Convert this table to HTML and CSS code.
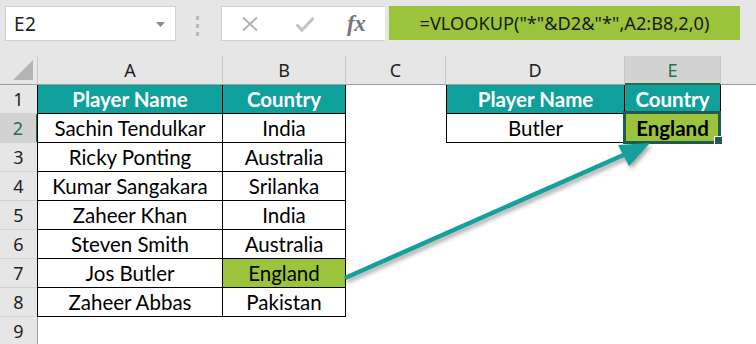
FILE: index.html
```html
<!DOCTYPE html>
<html lang="en">
<head>
<meta charset="utf-8">
<title>VLOOKUP wildcard</title>
<link rel="stylesheet" href="styles.css">
</head>
<body>
<div class="app">
  <div class="formula-bar">
    <div class="name-box">
      <span class="name-text">E2</span>
      <svg class="caret" width="9" height="5" viewBox="0 0 9 5"><path d="M0 0h9L4.5 5z" fill="#8c8c8c"/></svg>
    </div>
    <div class="grip"><i></i><i></i><i></i></div>
    <div class="fx-box">
      <svg class="ico" width="18" height="16" viewBox="0 0 18 16"><path d="M2 1.5l14 13M16 1.5l-14 13" stroke="#b3b3b3" stroke-width="2" fill="none"/></svg>
      <svg class="ico" width="20" height="16" viewBox="0 0 20 16"><path d="M1.5 8.5l5.5 5.5L18.5 2" stroke="#c2c2c2" stroke-width="3" fill="none"/></svg>
      <span class="fx">fx</span>
    </div>
    <div class="formula">=VLOOKUP("*"&amp;D2&amp;"*",A2:B8,2,0)</div>
  </div>

  <div class="sheet">
    <div class="ch corner"></div>
    <div class="ch">A</div>
    <div class="ch">B</div>
    <div class="ch">C</div>
    <div class="ch">D</div>
    <div class="ch sel">E</div>
    <div class="ch last"></div>

    <div class="rh">1</div>
    <div class="c t th first">Player Name</div>
    <div class="c t th">Country</div>
    <div class="c"></div>
    <div class="c t th left">Player Name</div>
    <div class="c t th">Country</div>
    <div class="c"></div>

    <div class="rh sel">2</div>
    <div class="c t first">Sachin Tendulkar</div>
    <div class="c t">India</div>
    <div class="c"></div>
    <div class="c t left">Butler</div>
    <div class="c t hit active">England</div>
    <div class="c"></div>

    <div class="rh">3</div>
    <div class="c t first">Ricky Ponting</div>
    <div class="c t">Australia</div>
    <div class="c"></div><div class="c"></div><div class="c"></div><div class="c"></div>

    <div class="rh">4</div>
    <div class="c t first">Kumar Sangakara</div>
    <div class="c t">Srilanka</div>
    <div class="c"></div><div class="c"></div><div class="c"></div><div class="c"></div>

    <div class="rh">5</div>
    <div class="c t first">Zaheer Khan</div>
    <div class="c t">India</div>
    <div class="c"></div><div class="c"></div><div class="c"></div><div class="c"></div>

    <div class="rh">6</div>
    <div class="c t first">Steven Smith</div>
    <div class="c t">Australia</div>
    <div class="c"></div><div class="c"></div><div class="c"></div><div class="c"></div>

    <div class="rh">7</div>
    <div class="c t first">Jos Butler</div>
    <div class="c t match">England</div>
    <div class="c"></div><div class="c"></div><div class="c"></div><div class="c"></div>

    <div class="rh">8</div>
    <div class="c t first">Zaheer Abbas</div>
    <div class="c t">Pakistan</div>
    <div class="c"></div><div class="c"></div><div class="c"></div><div class="c"></div>

    <div class="rh">9</div>
    <div class="c"></div><div class="c"></div><div class="c"></div><div class="c"></div><div class="c"></div><div class="c"></div>
  </div>

  <svg class="arrow" width="756" height="344" viewBox="0 0 756 344">
    <g class="arrow-shape">
      <line x1="345" y1="278" x2="628" y2="153" stroke="#14a19c" stroke-width="4.5"/>
      <polygon points="650,143 618,145 629,166" fill="#14a19c"/>
    </g>
  </svg>
</div>
</body>
</html>
```

FILE: styles.css
```css
* { box-sizing: border-box; }

html, body {
  margin: 0;
  padding: 0;
  background: #ffffff;
}

.app {
  position: relative;
  width: 756px;
  height: 344px;
  overflow: hidden;
  font-family: "Lato", "Liberation Sans", sans-serif;
  color: #000;
}

/* ---------- formula bar ---------- */
.formula-bar {
  display: flex;
  align-items: flex-start;
  height: 56px;
  padding: 6px 0 0 5px;
  background: #e6e6e6;
}

.name-box {
  display: flex;
  align-items: center;
  justify-content: space-between;
  width: 171px;
  height: 35px;
  padding: 0 10px 0 8px;
  background: #fff;
  border: 1px solid #d0d0d0;
}

.name-text {
  font-family: "Noto Sans", "Open Sans", sans-serif;
  font-size: 19px;
  color: #222;
  letter-spacing: 0.5px;
}

.caret { margin-top: 2px; }

.grip {
  display: flex;
  flex-direction: column;
  gap: 4px;
  width: 45px;
  padding: 10px 0 0 20px;
}
.grip i {
  display: block;
  width: 3px;
  height: 4px;
  background: #b9b9b9;
}

.fx-box {
  display: flex;
  align-items: center;
  width: 164px;
  height: 35px;
  padding-left: 19px;
  background: #fff;
  border: 1px solid #d0d0d0;
  border-right: none;
}
.fx-box .ico:nth-child(2) { margin-left: 36px; }

.fx {
  margin-left: 32px;
  font-family: "Liberation Serif", serif;
  font-style: italic;
  font-weight: 700;
  font-size: 23px;
  color: #767676;
  letter-spacing: -0.5px;
}

.formula {
  width: 351px;
  height: 34px;
  margin-left: 4px;
  background: #9bc43c;
  font-family: "Noto Sans", "Open Sans", sans-serif;
  font-size: 18.2px;
  line-height: 34px;
  color: #1a1a1a;
  text-align: center;
  white-space: nowrap;
}

/* ---------- grid ---------- */
.sheet {
  display: grid;
  grid-template-columns: 38px 185px 123px 100px 179px 96px 1fr;
  grid-auto-rows: 29px;
}

.ch {
  display: flex;
  align-items: center;
  justify-content: center;
  background: #e6e6e6;
  border-right: 1px solid #c8c8c8;
  border-bottom: 1px solid #9e9e9e;
  font-family: "Noto Sans", "Open Sans", sans-serif;
  font-size: 18px;
  color: #1e1e1e;
}
.ch.last { border-right: none; }
.ch.sel {
  background: #d2d2d2;
  color: #217346;
  border-bottom: 2px solid #217346;
  padding-top: 1px;
}

.corner {
  position: relative;
  border-right: 1px solid #c8c8c8;
}
.corner::after {
  content: "";
  position: absolute;
  right: 4px;
  bottom: 4px;
  width: 0;
  height: 0;
  border-left: 20px solid transparent;
  border-bottom: 20px solid #b4b4b4;
}

.rh {
  display: flex;
  align-items: center;
  justify-content: center;
  background: #e6e6e6;
  border-right: 1px solid #9e9e9e;
  border-bottom: 1px solid #d4d4d4;
  font-family: "Noto Sans", "Open Sans", sans-serif;
  font-size: 18px;
  color: #1e1e1e;
}
.rh.sel {
  background: #d2d2d2;
  color: #217346;
  border-right: 2px solid #217346;
}

.c {
  display: flex;
  align-items: center;
  justify-content: center;
  font-size: 20.5px;
  white-space: nowrap;
}

.t {
  border-right: 1px solid #000;
  border-bottom: 1px solid #000;
}
.t.first {
  margin-left: -1px;
  border-left: 1px solid #000;
}
.t.left { border-left: 1px solid #000; }

.th {
  background: #0fa09b;
  color: #fff;
  font-weight: 700;
}

.match { background: #9bc43c; }

.hit {
  background: #9bc43c;
  font-weight: 700;
}

.active { position: relative; }
.active::before {
  content: "";
  position: absolute;
  left: -2px;
  top: -3px;
  right: -1px;
  bottom: -2px;
  border: 3px solid #1f5c4e;
}
.active::after {
  content: "";
  position: absolute;
  right: -3px;
  bottom: -3px;
  width: 7px;
  height: 7px;
  background: #1f5c4e;
  border: 1px solid #fff;
}

/* ---------- arrow overlay ---------- */
.arrow {
  position: absolute;
  left: 0;
  top: 0;
  pointer-events: none;
}
.arrow-shape {
  filter: drop-shadow(2px 3px 2px rgba(0, 0, 0, 0.35));
}
```
